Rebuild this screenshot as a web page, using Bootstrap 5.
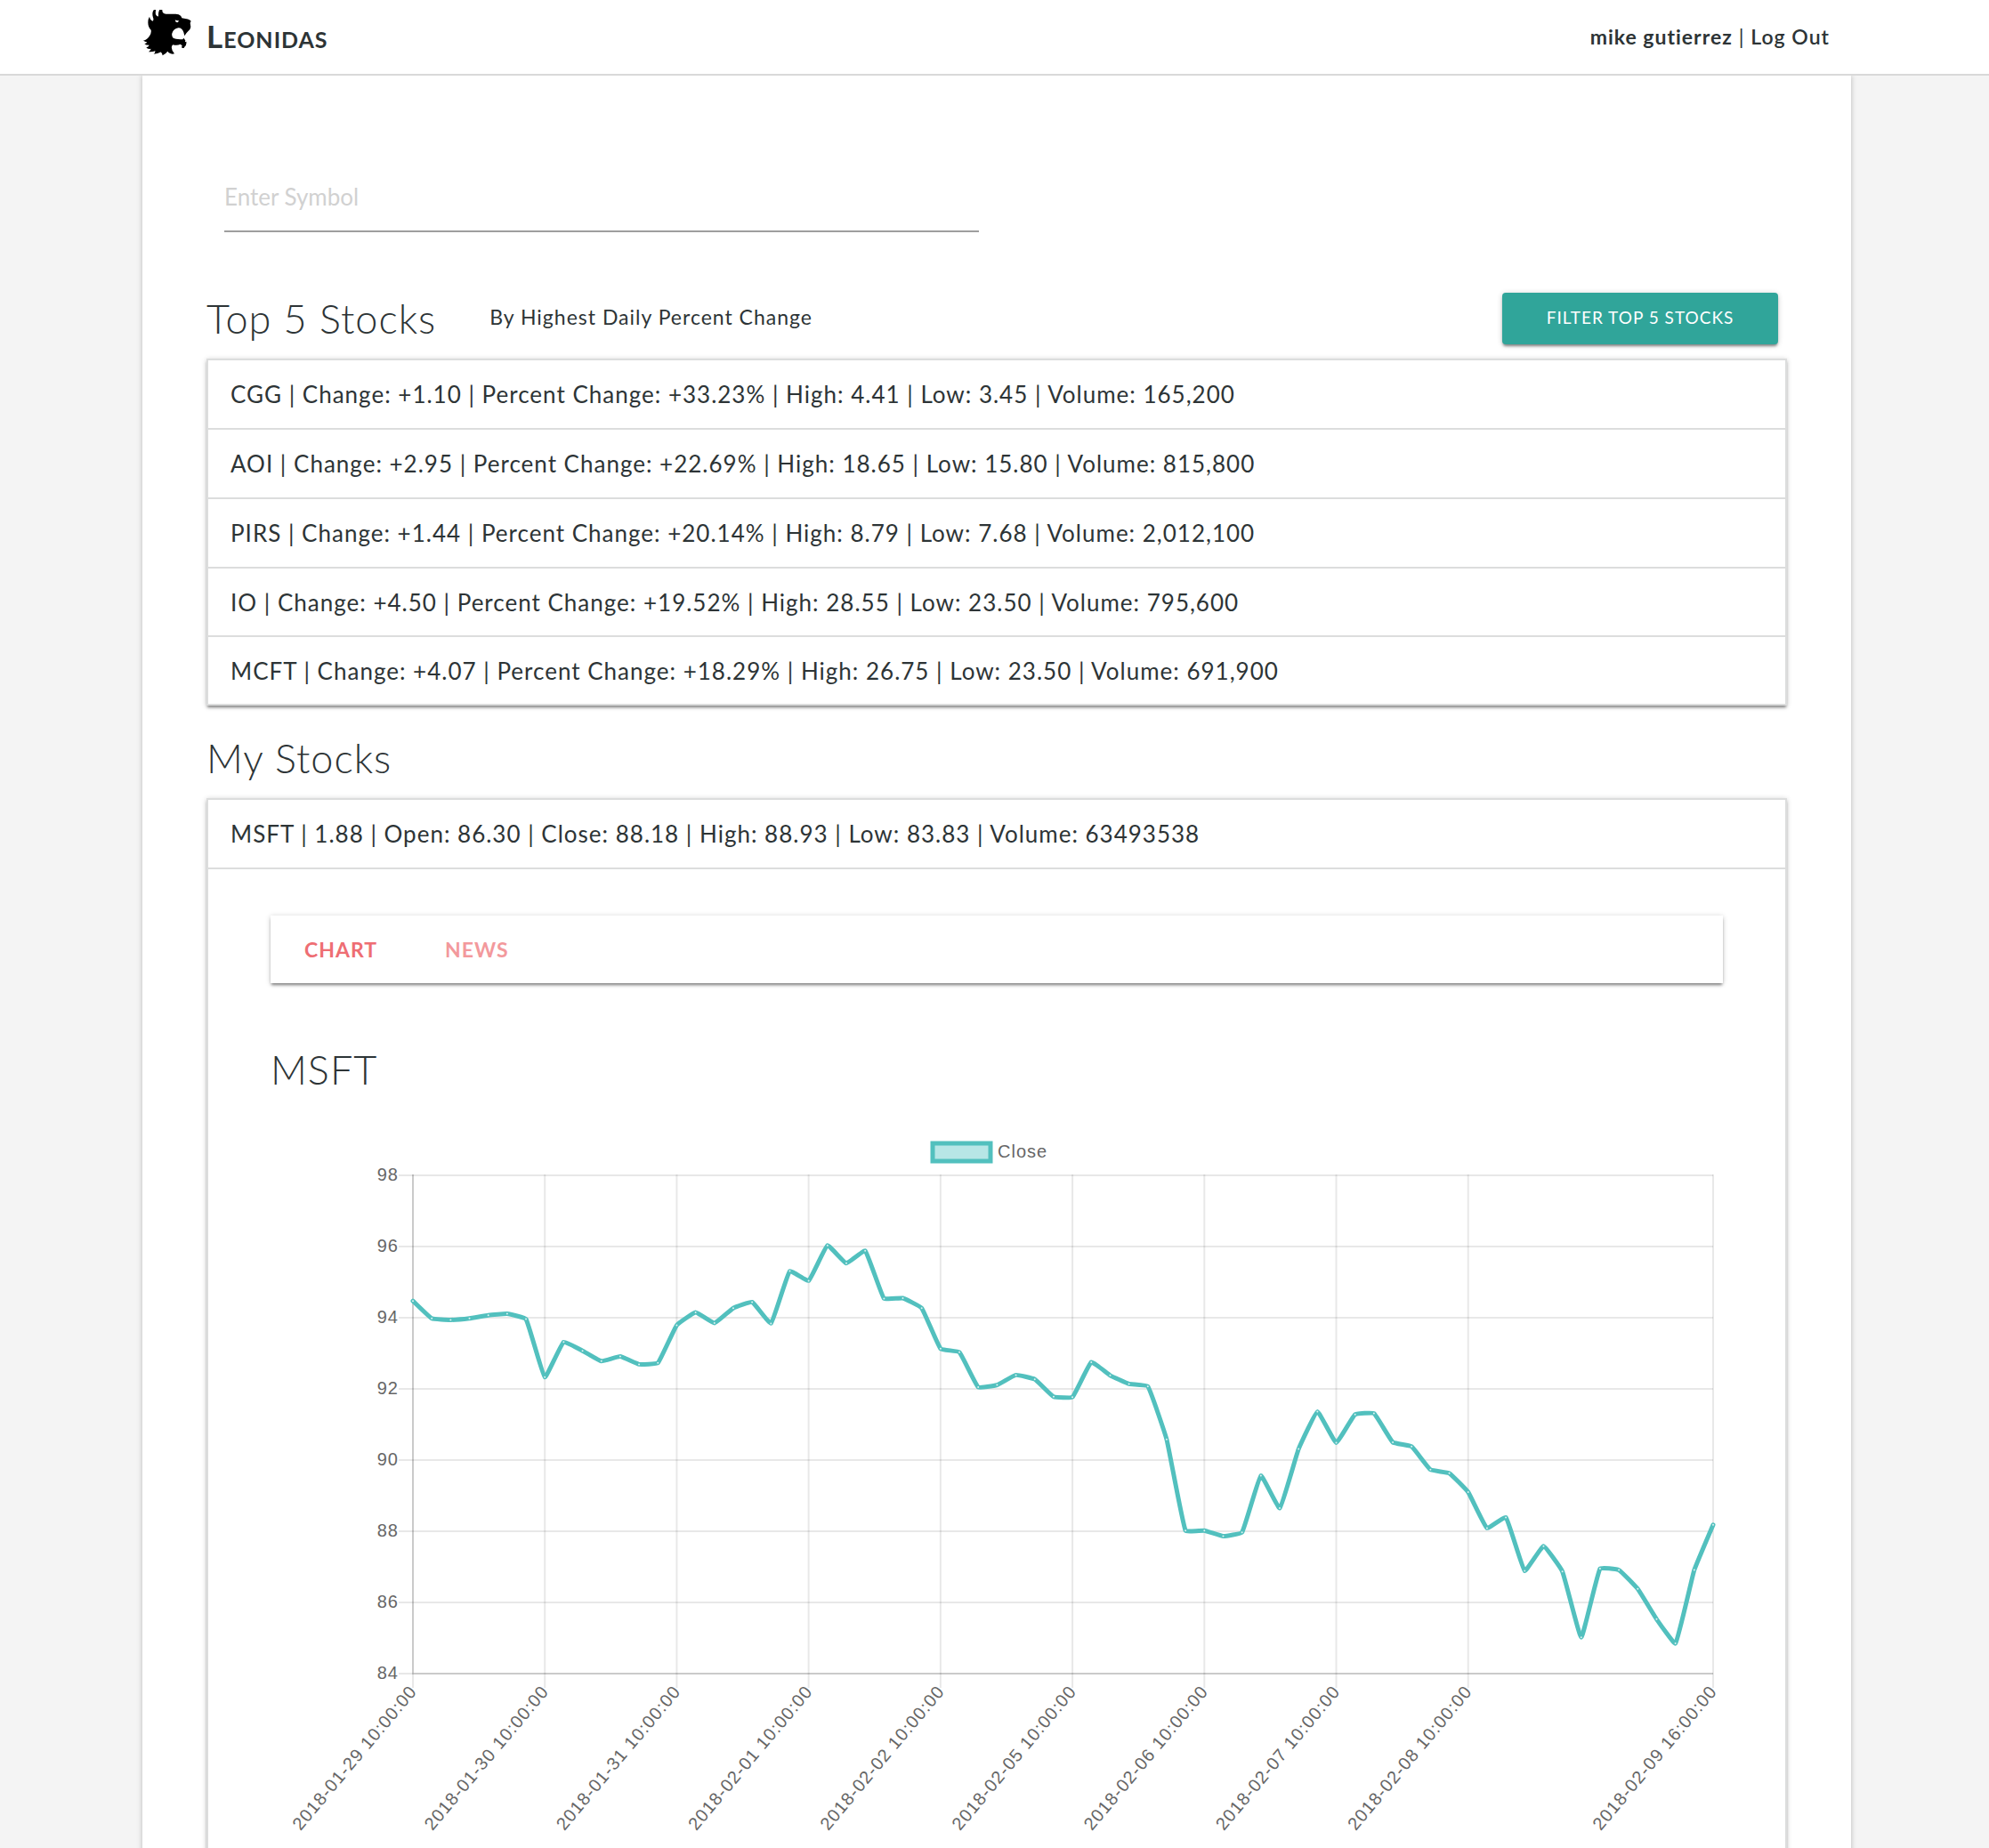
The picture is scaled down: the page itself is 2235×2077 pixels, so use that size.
<!DOCTYPE html>
<html lang="en">
<head>
<meta charset="utf-8">
<meta name="viewport" content="width=device-width, initial-scale=1">
<title>Leonidas</title>
<link href="https://cdn.jsdelivr.net/npm/bootstrap@5.3.0/dist/css/bootstrap.min.css" rel="stylesheet">
<style>
  :root { --ink: #2d3436; --rule: #dcdddd; --teal: #30a59a; --coral: #ee6e73; }
  body { background: #f4f4f4; color: var(--ink); font-family: Lato, "Liberation Sans", sans-serif; font-size: 23px; letter-spacing: 1px; }
  .app-shell { height: 100vh; overflow: hidden; }
  .gutter { padding-left: 160px; padding-right: 155px; }
  .top-bar { background: #fff; border-bottom: 2px solid #d9d9d9; z-index: 2; }
  .top-bar .inner { height: 83px; }
  .brand-name { font-size: 35px; font-weight: 700; font-variant: small-caps; line-height: 40px; }
  .logo { width: 56px; height: 58px; }
  .top-bar a { color: var(--ink); text-decoration: none; }
  .sheet { background: #fff; padding: 96px 72px 0; box-shadow: 0 0 6px rgba(0,0,0,.25); }
  .symbol-field { padding: 0 20px; }
  .symbol-input { display: block; width: 100%; height: 80px; padding: 2px 0 0; border: 0; border-bottom: 2px solid #9e9e9e; background: transparent; font-size: 26px; letter-spacing: normal; outline: 0; }
  .symbol-input::placeholder { color: #d1d1d1; opacity: 1; }
  .section-title { font-size: 45px; font-weight: 300; line-height: 58px; margin: 0; }
  .top-head { margin: 68px 0 16px; gap: 60px; }
  .my-head { margin: 26px 0 16px; }
  .raised { box-shadow: 0 3px 3px -1px rgba(0,0,0,.42), 0 1px 6px rgba(0,0,0,.2); }
  .filter-btn { width: 310px; height: 58px; margin-right: 10px; background: var(--teal); color: #fff; border: 0; border-radius: 4px; font-size: 19px; letter-spacing: 1px; }
  .filter-btn:hover { background: #2bbbad; color: #fff; }
  .stock-list { --bs-list-group-border-color: var(--rule); --bs-list-group-border-width: 2px; --bs-list-group-border-radius: 0; --bs-list-group-color: var(--ink); border: 2px solid var(--rule); border-bottom-width: 0; }
  .stock-list .list-group-item { border-width: 0 0 2px; padding: 18px 25px; font-size: 26px; line-height: 40px; }
  .stock-list li:nth-last-child(-n+2) { padding-bottom: 17px; }
  .stock-body { padding: 52px 70px 0; }
  .tab-strip { height: 76px; }
  .tab-strip .nav-link { padding: 0 38px; border: 0; background: transparent; color: var(--coral); opacity: .7; font-weight: 700; letter-spacing: 1px; }
  .tab-strip .nav-link.active { opacity: 1; }
  .chart-title { margin-top: 68px; }
  .chart { display: block; width: 100%; font-family: "Liberation Sans", Arial, sans-serif; font-size: 20px; letter-spacing: 1px; fill: #666; }
</style>
<script src="https://cdn.jsdelivr.net/npm/bootstrap@5.3.0/dist/js/bootstrap.bundle.min.js"></script>
</head>
<body>
<div class="app-shell d-flex flex-column">
  <header class="top-bar gutter position-relative">
    <div class="inner d-flex align-items-center justify-content-between">
      <a href="#" class="d-flex align-items-center gap-3 pb-1">
        <svg class="logo" viewBox="60 38.5 168 174" aria-hidden="true">
          <path d="M63 143Q77 139 84 127Q91 116 89 107Q79 96 79 81Q79 70 84 62Q86 74 95 77Q99 73 96 65Q92 51 96 43Q99 36 107 34Q103 46 105 54Q108 61 114 61Q113 48 117 39Q121 31 128 28Q126 40 128 46Q130 52 139 53L172 53Q184 54 188 58Q192 62 193 66L213 70Q221 72 224 77L221 83L223 96Q222 106 213 112Q209 115 202 126L199 114Q193 98 181 99Q165 101 160 118Q158 128 164 134Q172 139 196 138L199 134L205 142Q202 149 208 146Q210 158 202 164Q200 171 192 165L194 159L188 155Q176 160 163 156Q157 160 159 168Q159 176 168 186Q160 190 149 183L145 179Q140 187 128 192Q127 184 122 181Q112 187 98 188Q104 184 103 177Q95 181 81 180Q88 176 89 170Q80 172 73 166Q82 163 83 158Q72 158 67 153Q74 152 76 148Q69 147 63 143Z"/>
          <path d="M170 73L184 76L178 81L173 80Z" fill="#fff"/>
          <path d="M196 121l5 4-2 8-6-2z" fill="#fff"/>
        </svg>
        <span class="brand-name">Leonidas</span>
      </a>
      <div class="me-4"><a href="#" class="fw-bold">mike gutierrez</a> | <a href="#" class="fw-semibold">Log Out</a></div>
    </div>
  </header>

  <div class="gutter flex-grow-1">
    <main class="sheet h-100">
      <form class="row g-0">
        <div class="col-6 symbol-field">
          <input class="symbol-input" type="text" placeholder="Enter Symbol" aria-label="Enter Symbol">
        </div>
      </form>

      <div class="top-head d-flex align-items-center">
        <h2 class="section-title">Top 5 Stocks</h2>
        <div class="pb-1">By Highest Daily Percent Change</div>
        <button type="button" class="btn filter-btn raised ms-auto pb-2">FILTER TOP 5 STOCKS</button>
      </div>
      <ul class="list-group stock-list raised">
        <li class="list-group-item">CGG | Change: +1.10 | Percent Change: +33.23% | High: 4.41 | Low: 3.45 | Volume: 165,200</li>
        <li class="list-group-item">AOI | Change: +2.95 | Percent Change: +22.69% | High: 18.65 | Low: 15.80 | Volume: 815,800</li>
        <li class="list-group-item">PIRS | Change: +1.44 | Percent Change: +20.14% | High: 8.79 | Low: 7.68 | Volume: 2,012,100</li>
        <li class="list-group-item">IO | Change: +4.50 | Percent Change: +19.52% | High: 28.55 | Low: 23.50 | Volume: 795,600</li>
        <li class="list-group-item">MCFT | Change: +4.07 | Percent Change: +18.29% | High: 26.75 | Low: 23.50 | Volume: 691,900</li>
      </ul>

      <h2 class="section-title my-head pt-1">My Stocks</h2>
      <div class="stock-list raised">
        <div class="list-group-item">MSFT | 1.88 | Open: 86.30 | Close: 88.18 | High: 88.93 | Low: 83.83 | Volume: 63493538</div>
        <div class="stock-body">
          <div class="nav tab-strip raised" role="tablist">
            <button type="button" class="nav-link active" role="tab" aria-selected="true">CHART</button>
            <button type="button" class="nav-link" role="tab" aria-selected="false">NEWS</button>
          </div>
          <h2 class="section-title chart-title">MSFT</h2>
          <svg class="chart" id="closeChart" viewBox="0 0 1632 900" role="img" aria-label="MSFT closing prices"></svg>
        </div>
      </div>
    </main>
  </div>
</div>

<script>
  // Hourly closing prices, seven per trading day
  const closes = [
    94.47, 93.98, 93.94, 93.98, 94.07, 94.11, 93.96, 92.33, 93.32, 93.07, 92.78, 92.91, 92.69, 92.73,
    93.79, 94.15, 93.85, 94.27, 94.44, 93.84, 95.31, 95.04, 96.03, 95.53, 95.88, 94.54, 94.55, 94.27,
    93.13, 93.03, 92.05, 92.11, 92.39, 92.27, 91.78, 91.77, 92.75, 92.38, 92.14, 92.07, 90.58, 88.02,
    88.02, 87.86, 87.97, 89.56, 88.65, 90.31, 91.36, 90.49, 91.28, 91.31, 90.50, 90.38, 89.73, 89.63,
    89.10, 88.09, 88.39, 86.89, 87.58, 86.87, 85.02, 86.95, 86.91, 86.38, 85.53, 84.85, 86.91, 88.18
  ];
  const labels = {
    0: '2018-01-29 10:00:00', 7: '2018-01-30 10:00:00', 14: '2018-01-31 10:00:00', 21: '2018-02-01 10:00:00',
    28: '2018-02-02 10:00:00', 35: '2018-02-05 10:00:00', 42: '2018-02-06 10:00:00', 49: '2018-02-07 10:00:00',
    56: '2018-02-08 10:00:00', 69: '2018-02-09 16:00:00'
  };
  const left = 160, right = 1621, top0 = 90, bottom = 650;
  const px = i => left + (right - left) * i / (closes.length - 1);
  const py = v => top0 + (98 - v) * (bottom - top0) / 14;

  let out = '<rect x="744" y="54" width="65" height="20" fill="#b7e6e6" stroke="#52c0be" stroke-width="5"/>' +
            '<text x="817" y="70">Close</text>';

  for (let v = 98; v >= 84; v -= 2) {
    out += `<path d="M144 ${py(v)}H${right}" stroke="#000" stroke-opacity=".09" stroke-width="2"/>` +
           `<text x="144" y="${py(v) + 6}" text-anchor="end">${v}</text>`;
  }
  for (const i in labels) {
    const x = px(+i);
    out += `<path d="M${x} ${top0 - 1}V666" stroke="#000" stroke-opacity=".09" stroke-width="2"/>` +
           `<text transform="translate(${x} 666) rotate(-50)" y="7" text-anchor="end">${labels[i]}</text>`;
  }
  out += `<path d="M${left} ${top0 - 1}V${bottom}H${right}" fill="none" stroke="#000" stroke-opacity=".13" stroke-width="2"/>`;

  // Bezier curve with a slight tension, control points taken from the neighbouring points
  const pts = closes.map((v, i) => ({ x: px(i), y: py(v) }));
  const ctrl = pts.map((p, i) => {
    const a = pts[i - 1] || p, b = pts[i + 1] || p;
    const d1 = Math.hypot(p.x - a.x, p.y - a.y), d2 = Math.hypot(b.x - p.x, b.y - p.y);
    const f1 = 0.1 * d1 / (d1 + d2), f2 = 0.1 * d2 / (d1 + d2);
    return { px: p.x - f1 * (b.x - a.x), py: p.y - f1 * (b.y - a.y), nx: p.x + f2 * (b.x - a.x), ny: p.y + f2 * (b.y - a.y) };
  });
  let d = `M${pts[0].x} ${pts[0].y}`;
  for (let i = 1; i < pts.length; i++) {
    d += `C${ctrl[i - 1].nx} ${ctrl[i - 1].ny} ${ctrl[i].px} ${ctrl[i].py} ${pts[i].x} ${pts[i].y}`;
  }
  out += `<path d="${d}" fill="none" stroke="#52c0be" stroke-width="5" stroke-linejoin="round" stroke-linecap="round"/>`;
  out += pts.map(p => `<circle cx="${p.x}" cy="${p.y}" r="1" fill="#fff" fill-opacity=".8"/>`).join('');
  document.getElementById('closeChart').innerHTML = out;
</script>
</body>
</html>
